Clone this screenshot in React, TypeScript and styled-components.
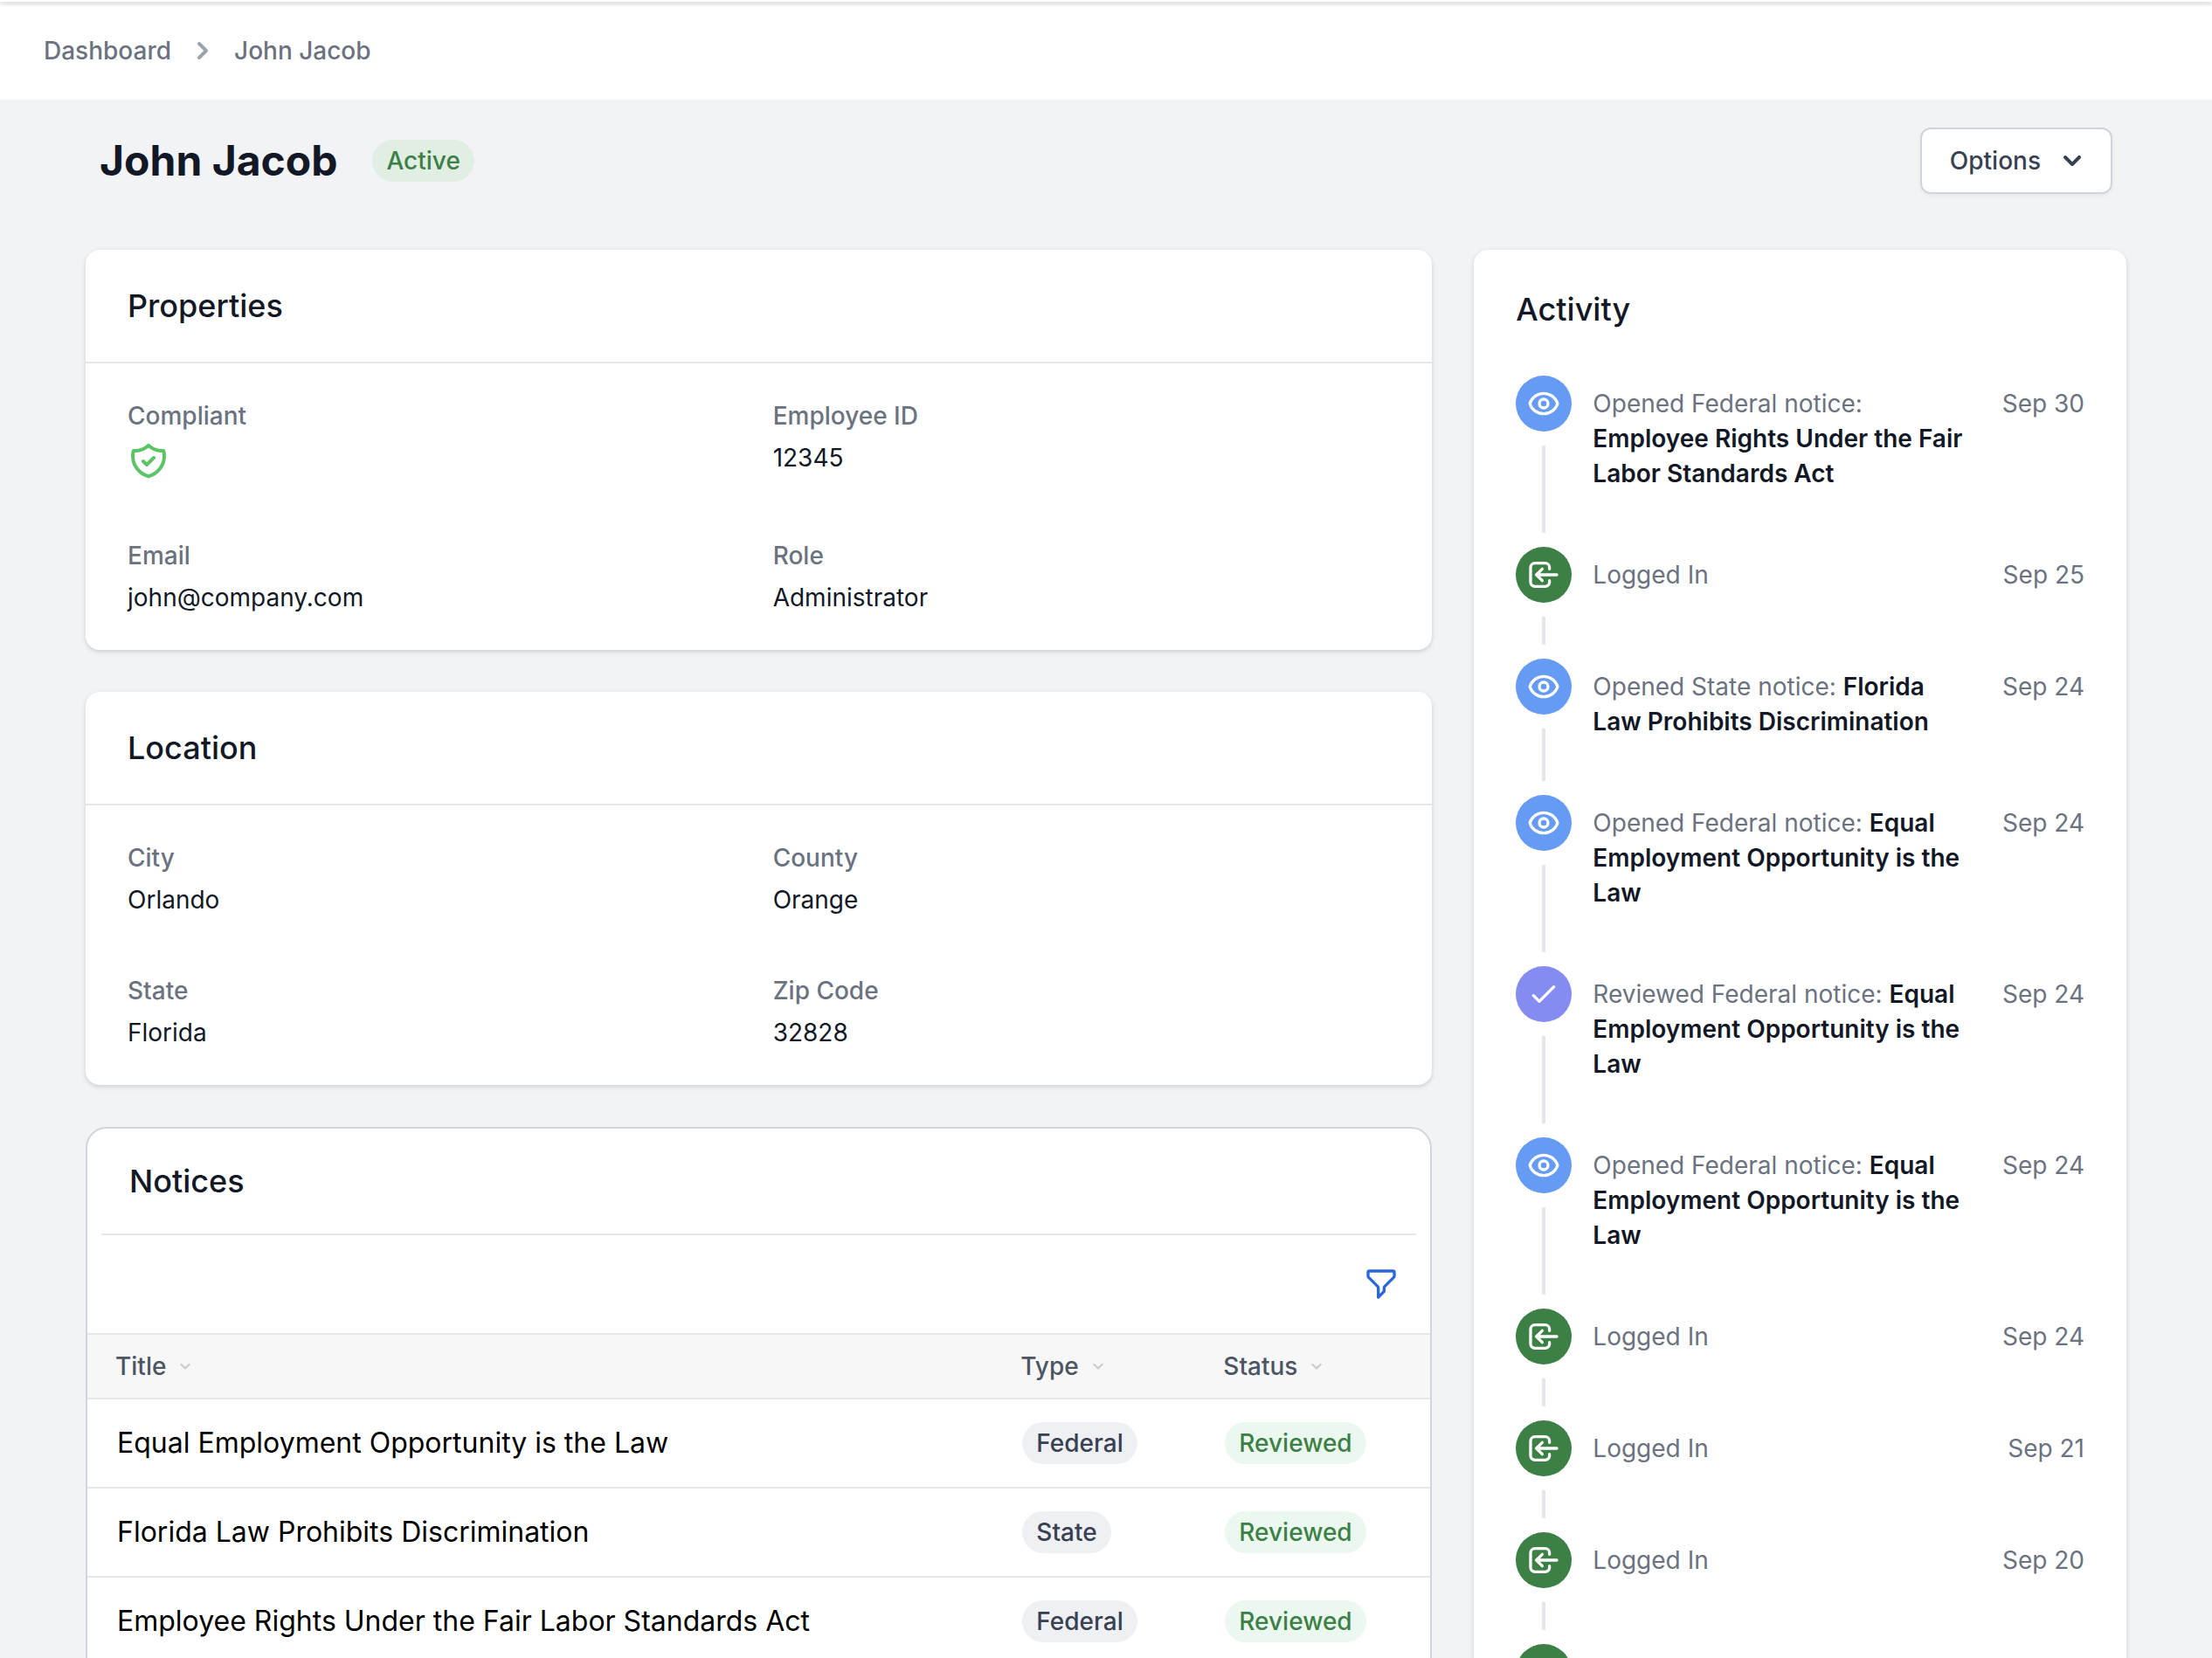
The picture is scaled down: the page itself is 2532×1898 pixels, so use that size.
import React from "react";
import styled, { createGlobalStyle } from "styled-components";

const color = {
  ink: "#121826",
  body: "#374151",
  head: "#4b5563",
  muted: "#6b7280",
  faint: "#9ca3af",
  line: "#e5e7eb",
  border: "#d1d5db",
  canvas: "#f2f3f5",
  green: "#3d8045",
  blue: "#659bf3",
  violet: "#848cf1",
};

const GlobalStyle = createGlobalStyle`
  *, *::before, *::after { box-sizing: border-box; }
  body {
    margin: 0;
    background: ${color.canvas};
    color: ${color.ink};
    font-family: Inter, "Liberation Sans", sans-serif;
    font-size: 28px;
    line-height: 40px;
  }
  h1, h2, dl, dd, ol, p { margin: 0; padding: 0; }
  ol { list-style: none; }
  button { font: inherit; color: inherit; cursor: pointer; }
`;

const Shell = styled.div`
  display: flex;
  flex-direction: column;
  height: 100vh;
  overflow: hidden;
`;

const TopEdge = styled.div`
  flex: none;
  position: relative;
  height: 2px;
  background: #fff;
  box-shadow: 0 2px 4px rgba(0, 0, 0, 0.3);
`;

const Breadcrumbs = styled.nav`
  flex: none;
  display: flex;
  align-items: center;
  gap: 16px;
  height: 112px;
  padding: 0 50px;
  background: #fff;
  color: ${color.muted};
  font-weight: 500;
`;

const Crumb = styled.a`
  color: inherit;
  text-decoration: none;
`;

const Icon = styled.svg<{ $size: number; $color?: string }>`
  display: block;
  flex: none;
  width: ${(p) => p.$size}px;
  height: ${(p) => p.$size}px;
  color: ${(p) => p.$color || "inherit"};
`;

const Main = styled.main`
  flex: 1;
  min-height: 0;
  padding: 32px 98px;
  overflow-y: auto;
  scrollbar-width: none;
`;

const PageHeader = styled.header`
  display: flex;
  align-items: center;
  justify-content: space-between;
  padding: 0 16px;
  margin-bottom: 64px;
`;

const Heading = styled.div`
  display: flex;
  align-items: center;
  gap: 40px;
`;

const PageTitle = styled.h1`
  font-size: 48px;
  line-height: 56px;
  font-weight: 700;
`;

const tones = {
  active: { bg: "#e0eee4", fg: color.green },
  reviewed: { bg: "#ebf8f0", fg: color.green },
  neutral: { bg: "#eff0f3", fg: color.body },
};

const Badge = styled.span<{ $tone: keyof typeof tones }>`
  display: inline-block;
  vertical-align: middle;
  padding: 4px 16px;
  border-radius: 24px;
  background: ${(p) => tones[p.$tone].bg};
  color: ${(p) => tones[p.$tone].fg};
  font-size: 28px;
  line-height: 40px;
  font-weight: 500;
`;

const OptionsButton = styled.button`
  display: flex;
  align-items: center;
  gap: 16px;
  padding: 16px 24px 16px 32px;
  border: 2px solid ${color.border};
  border-radius: 12px;
  background: #fff;
  box-shadow: 0 2px 4px rgba(0, 0, 0, 0.05);
  color: ${color.body};
  font-weight: 500;
`;

const Columns = styled.div`
  display: grid;
  grid-template-columns: repeat(3, minmax(0, 1fr));
  gap: 48px;
  align-items: start;
`;

const MainColumn = styled.div`
  grid-column: span 2;
  display: flex;
  flex-direction: column;
  gap: 48px;
`;

const Card = styled.section`
  border-radius: 16px;
  background: #fff;
  box-shadow: 0 2px 6px rgba(0, 0, 0, 0.1), 0 2px 4px rgba(0, 0, 0, 0.06);
`;

const CardTitle = styled.h2`
  font-size: 36px;
  line-height: 48px;
  font-weight: 500;
`;

const CardHeader = styled.div`
  padding: 40px 48px;
  border-bottom: 2px solid ${color.line};
`;

const Fields = styled.dl`
  display: grid;
  grid-template-columns: repeat(2, minmax(0, 1fr));
  gap: 64px 32px;
  padding: 40px 48px;
`;

const Field = styled.div`
  display: flex;
  flex-direction: column;
  gap: 8px;
`;

const FieldLabel = styled.dt`
  color: ${color.muted};
  font-weight: 500;
`;

const NoticesCard = styled.section`
  overflow: hidden;
  padding-bottom: 48px;
  border: 2px solid ${color.border};
  border-radius: 24px;
  background: #fff;
`;

const NoticesHeader = styled.div`
  margin: 0 16px;
  padding: 36px 32px;
  border-bottom: 2px solid ${color.line};
`;

const FilterBar = styled.div`
  display: flex;
  justify-content: flex-end;
  padding: 36px;
`;

const FilterButton = styled.button`
  padding: 0;
  border: 0;
  background: none;
  color: #2b66da;
`;

const Table = styled.table`
  width: 100%;
  table-layout: fixed;
  border-collapse: separate;
  border-spacing: 0;
`;

const HeadCell = styled.th<{ $width?: number }>`
  width: ${(p) => (p.$width ? `${p.$width}px` : "auto")};
  padding: 16px 0 16px 32px;
  border-top: 2px solid ${color.line};
  border-bottom: 2px solid ${color.line};
  background: #f7f7f8;
  color: ${color.head};
  font-weight: 500;
  text-align: left;
`;

const SortButton = styled.button`
  display: flex;
  align-items: center;
  gap: 16px;
  padding: 0;
  border: 0;
  background: none;
`;

const Cell = styled.td`
  height: 102px;
  padding: 0 0 0 34px;
  border-bottom: 2px solid ${color.line};
  color: #000;
  font-size: 32px;
  vertical-align: middle;
`;

const ActivityCard = styled(Card)`
  padding: 40px 48px;
`;

const ActivityTitle = styled(CardTitle)`
  line-height: 56px;
  margin-bottom: 48px;
`;

const Event = styled.li`
  display: flex;
  gap: 24px;
`;

const Rail = styled.div`
  flex: none;
  display: flex;
  flex-direction: column;
  align-items: center;
`;

const Marker = styled.span<{ $bg: string }>`
  display: flex;
  align-items: center;
  justify-content: center;
  width: 64px;
  height: 64px;
  border-radius: 50%;
  background: ${(p) => p.$bg};
  color: #fff;
`;

const Connector = styled.span`
  flex: 1;
  width: 4px;
  min-height: 32px;
  margin: 16px 0;
  background: ${color.line};
`;

const EventBody = styled.div`
  flex: 1;
  display: flex;
  justify-content: space-between;
  gap: 32px;
  padding: 12px 0 64px;
  color: ${color.muted};

  strong {
    color: ${color.ink};
    font-weight: 600;
  }

  time {
    flex: none;
    white-space: nowrap;
  }
`;

const paths = {
  eye: [
    "M15 12a3 3 0 11-6 0 3 3 0 016 0z",
    "M2.458 12C3.732 7.943 7.523 5 12 5c4.478 0 8.268 2.943 9.542 7-1.274 4.057-5.064 7-9.542 7-4.477 0-8.268-2.943-9.542-7z",
  ],
  login: [
    "M11 16l-4-4m0 0l4-4m-4 4h14m-5 4v1a3 3 0 01-3 3H6a3 3 0 01-3-3V7a3 3 0 013-3h7a3 3 0 013 3v1",
  ],
  check: ["M5 13l4 4L19 7"],
  shield: [
    "M9 12l2 2 4-4m5.618-4.016A11.955 11.955 0 0112 2.944a11.955 11.955 0 01-8.618 3.04A12.02 12.02 0 003 9c0 5.591 3.824 10.29 9 11.622 5.176-1.332 9-6.03 9-11.622 0-1.042-.133-2.052-.382-3.016z",
  ],
  filter: [
    "M3 4a1 1 0 011-1h16a1 1 0 011 1v2.586a1 1 0 01-.293.707l-6.414 6.414a1 1 0 00-.293.707V17l-4 4v-6.586a1 1 0 00-.293-.707L3.293 7.293A1 1 0 013 6.586V4z",
  ],
};

function Outline({ name, size, tint }: { name: keyof typeof paths; size: number; tint?: string }) {
  return (
    <Icon
      $size={size}
      $color={tint}
      viewBox="0 0 24 24"
      fill="none"
      stroke="currentColor"
      strokeWidth={2}
      strokeLinecap="round"
      strokeLinejoin="round"
      aria-hidden="true"
    >
      {paths[name].map((d) => (
        <path key={d} d={d} />
      ))}
    </Icon>
  );
}

function Solid({ d, tint }: { d: string; tint?: string }) {
  return (
    <Icon $size={40} $color={tint} viewBox="0 0 20 20" fill="currentColor" aria-hidden="true">
      <path fillRule="evenodd" clipRule="evenodd" d={d} />
    </Icon>
  );
}

const chevronRight =
  "M7.293 14.707a1 1 0 010-1.414L10.586 10 7.293 6.707a1 1 0 011.414-1.414l4 4a1 1 0 010 1.414l-4 4a1 1 0 01-1.414 0z";
const chevronDown =
  "M5.293 7.293a1 1 0 011.414 0L10 10.586l3.293-3.293a1 1 0 111.414 1.414l-4 4a1 1 0 01-1.414 0l-4-4a1 1 0 010-1.414z";

function SortHeader({ label }: { label: string }) {
  return (
    <SortButton type="button">
      {label}
      <Icon
        $size={12}
        $color="#cbced3"
        viewBox="0 0 12 12"
        fill="none"
        stroke="currentColor"
        strokeWidth={2.4}
        strokeLinecap="round"
        strokeLinejoin="round"
        aria-hidden="true"
      >
        <path d="M1.4 4L6 8.4 10.6 4" />
      </Icon>
    </SortButton>
  );
}

type FieldData = { label: string; value: React.ReactNode };

function FieldCard({ title, fields }: { title: string; fields: FieldData[] }) {
  return (
    <Card>
      <CardHeader>
        <CardTitle>{title}</CardTitle>
      </CardHeader>
      <Fields>
        {fields.map((f) => (
          <Field key={f.label}>
            <FieldLabel>{f.label}</FieldLabel>
            <dd>{f.value}</dd>
          </Field>
        ))}
      </Fields>
    </Card>
  );
}

const properties: FieldData[] = [
  { label: "Compliant", value: <Outline name="shield" size={48} tint="#5ac466" /> },
  { label: "Employee ID", value: "12345" },
  { label: "Email", value: "john@company.com" },
  { label: "Role", value: "Administrator" },
];

const location: FieldData[] = [
  { label: "City", value: "Orlando" },
  { label: "County", value: "Orange" },
  { label: "State", value: "Florida" },
  { label: "Zip Code", value: "32828" },
];

const equal = "Equal Employment Opportunity is the Law";
const florida = "Florida Law Prohibits Discrimination";
const rights = "Employee Rights Under the Fair Labor Standards Act";

const notices = [
  { title: equal, type: "Federal" },
  { title: florida, type: "State" },
  { title: rights, type: "Federal" },
];

type EventKind = "opened" | "reviewed" | "login";

const markers: Record<EventKind, { bg: string; icon: keyof typeof paths }> = {
  opened: { bg: color.blue, icon: "eye" },
  reviewed: { bg: color.violet, icon: "check" },
  login: { bg: color.green, icon: "login" },
};

const events: { kind: EventKind; text: string; notice?: string; date: string }[] = [
  { kind: "opened", text: "Opened Federal notice:", notice: rights, date: "Sep 30" },
  { kind: "login", text: "Logged In", date: "Sep 25" },
  { kind: "opened", text: "Opened State notice:", notice: florida, date: "Sep 24" },
  { kind: "opened", text: "Opened Federal notice:", notice: equal, date: "Sep 24" },
  { kind: "reviewed", text: "Reviewed Federal notice:", notice: equal, date: "Sep 24" },
  { kind: "opened", text: "Opened Federal notice:", notice: equal, date: "Sep 24" },
  { kind: "login", text: "Logged In", date: "Sep 24" },
  { kind: "login", text: "Logged In", date: "Sep 21" },
  { kind: "login", text: "Logged In", date: "Sep 20" },
  { kind: "login", text: "Logged In", date: "Sep 20" },
];

export default function App() {
  return (
    <>
      <GlobalStyle />
      <Shell>
        <TopEdge />
        <Breadcrumbs aria-label="Breadcrumb">
          <Crumb href="#">Dashboard</Crumb>
          <Solid d={chevronRight} tint={color.faint} />
          <Crumb href="#">John Jacob</Crumb>
        </Breadcrumbs>
        <Main>
          <PageHeader>
            <Heading>
              <PageTitle>John Jacob</PageTitle>
              <Badge $tone="active">Active</Badge>
            </Heading>
            <OptionsButton type="button">
              Options
              <Solid d={chevronDown} />
            </OptionsButton>
          </PageHeader>
          <Columns>
            <MainColumn>
              <FieldCard title="Properties" fields={properties} />
              <FieldCard title="Location" fields={location} />
              <NoticesCard>
                <NoticesHeader>
                  <CardTitle>Notices</CardTitle>
                </NoticesHeader>
                <FilterBar>
                  <FilterButton type="button" aria-label="Filter">
                    <Outline name="filter" size={40} />
                  </FilterButton>
                </FilterBar>
                <Table>
                  <thead>
                    <tr>
                      <HeadCell scope="col">
                        <SortHeader label="Title" />
                      </HeadCell>
                      <HeadCell scope="col" $width={232}>
                        <SortHeader label="Type" />
                      </HeadCell>
                      <HeadCell scope="col" $width={269}>
                        <SortHeader label="Status" />
                      </HeadCell>
                    </tr>
                  </thead>
                  <tbody>
                    {notices.map((n) => (
                      <tr key={n.title}>
                        <Cell>{n.title}</Cell>
                        <Cell>
                          <Badge $tone="neutral">{n.type}</Badge>
                        </Cell>
                        <Cell>
                          <Badge $tone="reviewed">Reviewed</Badge>
                        </Cell>
                      </tr>
                    ))}
                  </tbody>
                </Table>
              </NoticesCard>
            </MainColumn>
            <ActivityCard>
              <ActivityTitle>Activity</ActivityTitle>
              <ol>
                {events.map((e, i) => (
                  <Event key={i}>
                    <Rail>
                      <Marker $bg={markers[e.kind].bg}>
                        <Outline name={markers[e.kind].icon} size={40} />
                      </Marker>
                      <Connector />
                    </Rail>
                    <EventBody>
                      <p>
                        {e.text} {e.notice && <strong>{e.notice}</strong>}
                      </p>
                      <time>{e.date}</time>
                    </EventBody>
                  </Event>
                ))}
              </ol>
            </ActivityCard>
          </Columns>
        </Main>
      </Shell>
    </>
  );
}
